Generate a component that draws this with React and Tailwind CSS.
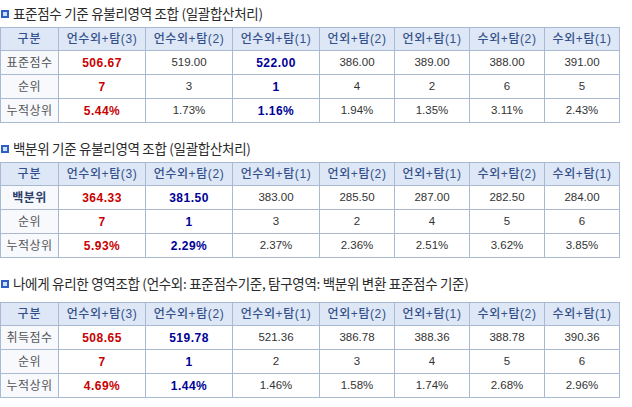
const cols = ["언수외+탐(3)", "언수외+탐(2)", "언수외+탐(1)", "언외+탐(2)", "언외+탐(1)", "수외+탐(2)", "수외+탐(1)"];
const widths = ["w-[58px]", "w-[87px]", "w-[87px]", "w-[87px]", "w-[75px]", "w-[75px]", "w-[75px]", "w-[75px]"];

const sections = [
  {
    title: "표준점수 기준 유불리영역 조합 (일괄합산처리)",
    label: "표준점수",
    labelBold: false,
    rows: [
      ["506.67", "519.00", "522.00", "386.00", "389.00", "388.00", "391.00"],
      ["7", "3", "1", "4", "2", "6", "5"],
      ["5.44%", "1.73%", "1.16%", "1.94%", "1.35%", "3.11%", "2.43%"],
    ],
    red: 0,
    blue: 2,
    head: "h-[27px]",
  },
  {
    title: "백분위 기준 유불리영역 조합 (일괄합산처리)",
    label: "백분위",
    labelBold: true,
    rows: [
      ["364.33", "381.50", "383.00", "285.50", "287.00", "282.50", "284.00"],
      ["7", "1", "3", "2", "4", "5", "6"],
      ["5.93%", "2.29%", "2.37%", "2.36%", "2.51%", "3.62%", "3.85%"],
    ],
    red: 0,
    blue: 1,
    head: "h-[27px]",
  },
  {
    title: "나에게 유리한 영역조합 (언수외: 표준점수기준, 탐구영역: 백분위 변환 표준점수 기준)",
    label: "취득점수",
    labelBold: false,
    rows: [
      ["508.65", "519.78", "521.36", "386.78", "388.36", "388.78", "390.36"],
      ["7", "1", "2", "3", "4", "5", "6"],
      ["4.69%", "1.44%", "1.46%", "1.58%", "1.74%", "2.68%", "2.96%"],
    ],
    red: 0,
    blue: 1,
    head: "h-[27px] pb-0",
  },
];

const labels = (first) => [first, "순위", "누적상위"];

function Section({ s, last }) {
  return (
    <div className={last ? "" : "mb-[12px]"}>
      <div className={`${s.head} flex items-center gap-[4px] pl-[1px]`}>
        <span className="w-[8px] h-[8px] border-2 border-[#2d5fc4] bg-[#cfe0fb] mt-[1px]" />
        <span className="text-[13.5px] text-[#2a2a2a] font-['Noto_Sans_CJK_KR',sans-serif] tracking-[-0.3px] leading-none">
          {s.title}
        </span>
      </div>
      <table className={`table-fixed border-collapse w-[619px] font-['Liberation_Sans','Noto_Sans_CJK_KR',sans-serif] ${last ? "mt-[5px]" : ""}`}>
        <colgroup>
          {widths.map((w, i) => (
            <col key={i} className={w} />
          ))}
        </colgroup>
        <thead>
          <tr className="h-[23px] bg-[#dde7f5]">
            <th className="border border-[#a9b9d1] text-[12px] font-medium text-[#34508a] tracking-[1px]">구분</th>
            {cols.map((c) => (
              <th key={c} className="border border-[#a9b9d1] text-[12px] font-medium text-[#34508a] tracking-[0.6px] whitespace-nowrap">
                {c}
              </th>
            ))}
          </tr>
        </thead>
        <tbody>
          {s.rows.map((r, ri) => (
            <tr key={ri} className="h-[24px]">
              <td
                className={`border border-[#a9b9d1] bg-[#f7f9fd] text-center text-[12px] tracking-[0.5px] whitespace-nowrap ${
                  ri === 0 && s.labelBold ? "font-bold text-[#2b3f6b]" : "text-[#555555]"
                }`}
              >
                {labels(s.label)[ri]}
              </td>
              {r.map((v, vi) => (
                <td
                  key={vi}
                  className={`border border-[#a9b9d1] text-center ${
                    vi === s.red
                      ? "text-[12px] font-bold text-[#c80000] tracking-[0.5px]"
                      : vi === s.blue
                      ? "text-[12px] font-bold text-[#000096] tracking-[0.5px]"
                      : "text-[11.5px] text-[#333333]"
                  }`}
                >
                  {v}
                </td>
              ))}
            </tr>
          ))}
        </tbody>
      </table>
    </div>
  );
}

export default function App() {
  return (
    <div className="w-[632px] h-[407px] bg-white overflow-hidden">
      {sections.map((s, i) => (
        <Section key={s.title} s={s} last={i === sections.length - 1} />
      ))}
    </div>
  );
}
